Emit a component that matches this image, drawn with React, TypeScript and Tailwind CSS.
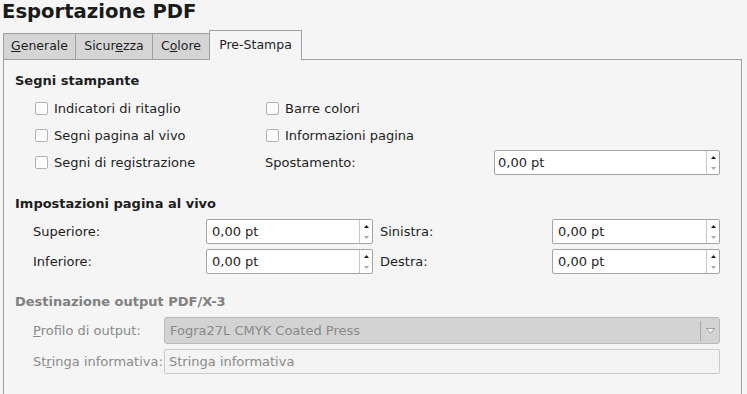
import React from "react";

const Check = ({ label }: { label: string }) => (
  <div className="flex items-center gap-[6px]">
    <span className="w-[13px] h-[13px] rounded-[2px] border border-[#b2b2b2] bg-[#fbfbfb]" />
    <span>{label}</span>
  </div>
);

const Spin = ({ pad = "pl-[5px]" }: { pad?: string }) => (
  <div className="flex h-[25px] rounded-[2px] border border-[#a3a3a3] bg-white">
    <div className={`flex flex-1 items-center ${pad}`}>0,00 pt</div>
    <div className="flex w-[13px] flex-col items-center justify-center gap-[8px] border-l border-[#c6c6c6]">
      <svg width="5" height="3" viewBox="0 0 5 3">
        <path d="M2.5 0L5 3H0z" fill="#1e1e1e" />
      </svg>
      <svg width="5" height="3" viewBox="0 0 5 3">
        <path d="M0 0h5L2.5 3z" fill="#a8a8a8" />
      </svg>
    </div>
  </div>
);

const Tab = ({ children, w, active }: { children: React.ReactNode; w: string; active?: boolean }) =>
  active ? (
    <div
      className={`relative z-10 -mb-px -ml-px flex h-[30px] items-start justify-center border border-b-0 border-[#a0a0a0] bg-[#f5f5f5] pt-[5px] ${w}`}
    >
      {children}
    </div>
  ) : (
    <div
      className={`-ml-px flex h-[26px] items-center justify-center border border-b-0 border-[#a0a0a0] bg-[#d5d5d5] first:ml-0 ${w}`}
    >
      {children}
    </div>
  );

export default function App() {
  return (
    <div className="flex h-[394px] w-[747px] flex-col overflow-hidden bg-[#f5f5f5] font-['DejaVu_Sans',sans-serif] text-[13px] text-[#1e1e1e]">
      <div className="h-[30px] pl-[2px] pt-[1px]">
        <h1 className="text-[19.6px] font-bold leading-[22px] text-[#1a1a1a]">Esportazione PDF</h1>
      </div>

      <div className="flex h-[29px] items-end pl-[3px] text-[12.5px]">
        <Tab w="w-[73px]">
          <span>
            <span className="underline">G</span>enerale
          </span>
        </Tab>
        <Tab w="w-[78px]">
          <span>
            Sicur<span className="underline">e</span>zza
          </span>
        </Tab>
        <Tab w="w-[58px]">
          <span>
            C<span className="underline">o</span>lore
          </span>
        </Tab>
        <Tab w="w-[93px]" active>
          Pre-Stampa
        </Tab>
      </div>

      <div className="ml-[3px] mr-[5px] flex-1 border border-b-0 border-[#a0a0a0] px-[11px]">
        <h2 className="mt-[13px] text-[13px] font-bold leading-[16px]">Segni stampante</h2>
        <div className="ml-[20px] mt-[6px] grid grid-cols-[231px_228px_226px] grid-rows-[27px_27px_27px] items-center">
          <Check label="Indicatori di ritaglio" />
          <div className="col-span-2">
            <Check label="Barre colori" />
          </div>
          <Check label="Segni pagina al vivo" />
          <div className="col-span-2">
            <Check label="Informazioni pagina" />
          </div>
          <Check label="Segni di registrazione" />
          <div className="-ml-px">Spostamento:</div>
          <Spin pad="pl-[3px]" />
        </div>

        <h2 className="mt-[20px] text-[13px] font-bold leading-[16px]">Impostazioni pagina al vivo</h2>
        <div className="ml-[18px] mt-[7px] grid grid-cols-[173px_167px_179px_168px] gap-y-[5px] items-center">
          <div>Superiore:</div>
          <Spin />
          <div className="pl-[7px]">Sinistra:</div>
          <Spin />
          <div>Inferiore:</div>
          <Spin />
          <div className="pl-[7px]">Destra:</div>
          <Spin />
        </div>

        <h2 className="mt-[20px] text-[13px] font-bold leading-[16px] text-[#808080]">
          Destinazione output PDF/X-3
        </h2>
        <div className="ml-[18px] mt-[7px] grid grid-cols-[131px_556px] gap-y-[5px] items-center text-[#8a8a8a]">
          <div>
            <span className="underline">P</span>rofilo di output:
          </div>
          <div className="flex h-[27px] items-center rounded-[3px] border border-[#bababa] bg-[#d3d3d3]">
            <div className="flex-1 pl-[5px]">Fogra27L CMYK Coated Press</div>
            <div className="flex h-[20px] w-[19px] items-center justify-center border-l border-[#a9a9a9]">
              <svg width="9" height="6" viewBox="0 0 9 6">
                <path d="M0.5 0.5h8L4.5 5.5z" fill="#fafafa" stroke="#8c8c8c" strokeWidth="0.8" />
              </svg>
            </div>
          </div>
          <div>
            St<span className="underline">r</span>inga informativa:
          </div>
          <div className="flex h-[25px] items-center rounded-[2px] border border-[#cacaca] bg-[#f3f3f3] pl-[4px]">
            Stringa informativa
          </div>
        </div>
      </div>
    </div>
  );
}
